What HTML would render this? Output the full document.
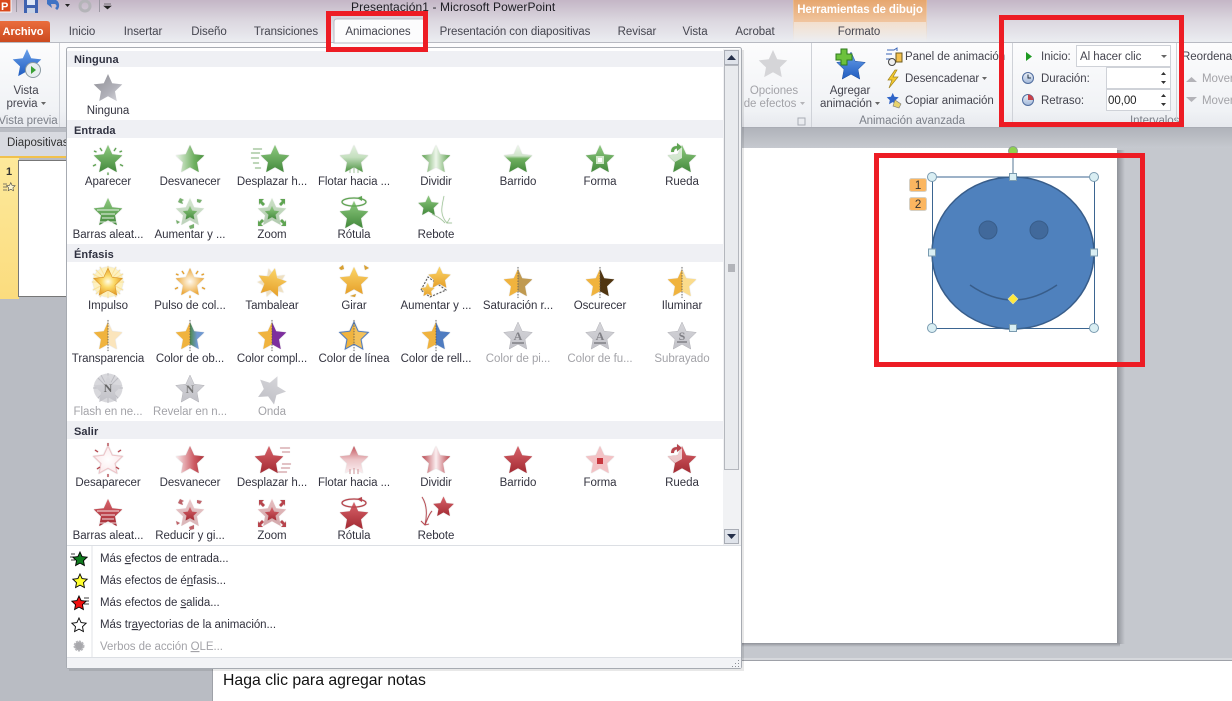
<!DOCTYPE html>
<html lang="es"><head><meta charset="utf-8"><title>Presentación1 - Microsoft PowerPoint</title>
<style>
html,body{margin:0;padding:0;width:1232px;height:701px;overflow:hidden;background:#c5c8ce}
svg{position:absolute;left:0;top:0;display:block}
text{font-family:"Liberation Sans",sans-serif;font-size:11.5px;letter-spacing:-.05px;fill:#33333f}
.c{text-anchor:middle}
.d{fill:#a3a3a8}
.h{font-weight:bold;fill:#2f3140;font-size:11px;letter-spacing:.1px}
.t{fill:#45454f}
.u{text-decoration:underline}
.sh{filter:drop-shadow(.8px .8px .4px rgba(0,0,0,.22))}
</style></head><body>
<svg width="1232" height="701" viewBox="0 0 1232 701" xmlns="http://www.w3.org/2000/svg">
<defs>
<linearGradient id="tb" x1="0" y1="0" x2="0" y2="1"><stop offset="0" stop-color="#c4b6c6"/><stop offset=".5" stop-color="#dcd8e0"/><stop offset="1" stop-color="#eceef2"/></linearGradient>
<linearGradient id="rb" x1="0" y1="0" x2="0" y2="1"><stop offset="0" stop-color="#fcfcfd"/><stop offset=".8" stop-color="#f0f2f5"/><stop offset="1" stop-color="#e6e8ed"/></linearGradient>
<linearGradient id="ctx" x1="0" y1="0" x2="0" y2="1"><stop offset="0" stop-color="#e6a66e"/><stop offset="1" stop-color="#f0c59f"/></linearGradient>
<linearGradient id="ctx2" x1="0" y1="0" x2="0" y2="1"><stop offset="0" stop-color="#f3dfcd"/><stop offset="1" stop-color="#eceef2"/></linearGradient>
<linearGradient id="ctl" x1="0" y1="0" x2="0" y2="1"><stop offset="0" stop-color="#e8b486"/><stop offset="1" stop-color="#eceef2"/></linearGradient>
<linearGradient id="arch" x1="0" y1="0" x2="0" y2="1"><stop offset="0" stop-color="#ea6d3d"/><stop offset="1" stop-color="#cc4a20"/></linearGradient>
<linearGradient id="gb" x1="0" y1="0" x2="0" y2="1"><stop offset="0" stop-color="#b0b3ba"/><stop offset="1" stop-color="#c6c9cf"/></linearGradient>
<linearGradient id="sr" x1="0" y1="0" x2="1" y2="0"><stop offset="0" stop-color="#8f9299"/><stop offset="1" stop-color="#c5c8ce"/></linearGradient>
<linearGradient id="sb" x1="0" y1="0" x2="0" y2="1"><stop offset="0" stop-color="#8f9299"/><stop offset="1" stop-color="#c5c8ce"/></linearGradient>
<linearGradient id="thy" x1="0" y1="0" x2="0" y2="1"><stop offset="0" stop-color="#fde99b"/><stop offset="1" stop-color="#fbdc7e"/></linearGradient>
<linearGradient id="clk" x1="0" y1="0" x2="0" y2="1"><stop offset="0" stop-color="#eef2f8"/><stop offset="1" stop-color="#9fb6d8"/></linearGradient>
<linearGradient id="G" x1="0" y1="0" x2="0" y2="1"><stop offset="0" stop-color="#8fcb80"/><stop offset="1" stop-color="#43893c"/></linearGradient>
<linearGradient id="Gf" x1="0" y1="0" x2="1" y2="0"><stop offset="0" stop-color="#eef6ec"/><stop offset=".65" stop-color="#6fb060"/><stop offset="1" stop-color="#4d9442"/></linearGradient>
<linearGradient id="Gs" x1="0" y1="0" x2="1" y2="0"><stop offset="0" stop-color="#5da04f"/><stop offset=".5" stop-color="#edf6ea"/><stop offset="1" stop-color="#5da04f"/></linearGradient>
<linearGradient id="Gv" x1="0" y1="0" x2="0" y2="1"><stop offset="0" stop-color="#eef6ec"/><stop offset=".4" stop-color="#cfe4ca"/><stop offset=".5" stop-color="#6fb060"/><stop offset="1" stop-color="#44893b"/></linearGradient>
<linearGradient id="Gu" x1="0" y1="0" x2="0" y2="1"><stop offset="0" stop-color="#e4f1e0"/><stop offset=".45" stop-color="#c5dfbf"/><stop offset="1" stop-color="#4d9442"/></linearGradient>
<linearGradient id="R" x1="0" y1="0" x2="0" y2="1"><stop offset="0" stop-color="#d8636a"/><stop offset="1" stop-color="#a32a33"/></linearGradient>
<linearGradient id="Rf" x1="0" y1="0" x2="1" y2="0"><stop offset="0" stop-color="#fbeef0"/><stop offset=".65" stop-color="#cc5a62"/><stop offset="1" stop-color="#ad333b"/></linearGradient>
<linearGradient id="Rs" x1="0" y1="0" x2="1" y2="0"><stop offset="0" stop-color="#b8444c"/><stop offset=".5" stop-color="#fbeef0"/><stop offset="1" stop-color="#b8444c"/></linearGradient>
<linearGradient id="Rv" x1="0" y1="0" x2="0" y2="1"><stop offset="0" stop-color="#c4545c"/><stop offset=".5" stop-color="#ecc5c8"/><stop offset="1" stop-color="#fbeef0"/></linearGradient>
<radialGradient id="Rw"><stop offset="0" stop-color="#fff"/><stop offset="1" stop-color="#fbeaec"/></radialGradient>
<linearGradient id="Y" x1="0" y1="0" x2="0" y2="1"><stop offset="0" stop-color="#fbd568"/><stop offset="1" stop-color="#e6a02a"/></linearGradient>
<radialGradient id="Yg"><stop offset="0" stop-color="#fffde8"/><stop offset=".45" stop-color="#fbd968"/><stop offset="1" stop-color="#e6a02a"/></radialGradient>
<radialGradient id="Yp"><stop offset="0" stop-color="#fffaf0"/><stop offset="1" stop-color="#eca83a"/></radialGradient>
<linearGradient id="Yt" x1="0" y1="0" x2="1" y2="0"><stop offset=".5" stop-color="#f0b33e"/><stop offset=".5" stop-color="#fbe5bc"/></linearGradient>
<linearGradient id="Yo" x1="0" y1="0" x2="1" y2="0"><stop offset=".5" stop-color="#f0b33e"/><stop offset=".5" stop-color="#4d8a4a"/><stop offset=".75" stop-color="#6f98d0"/></linearGradient>
<linearGradient id="Yc" x1="0" y1="0" x2="1" y2="0"><stop offset=".5" stop-color="#f0b33e"/><stop offset=".5" stop-color="#7d2f9e"/></linearGradient>
<linearGradient id="Yl" x1="0" y1="0" x2="1" y2="0"><stop offset=".5" stop-color="#f0b33e"/><stop offset=".5" stop-color="#f3c15b"/></linearGradient>
<linearGradient id="Yr" x1="0" y1="0" x2="1" y2="0"><stop offset=".5" stop-color="#f0b33e"/><stop offset=".5" stop-color="#4f7cc0"/></linearGradient>
<linearGradient id="Ys" x1="0" y1="0" x2="1" y2="0"><stop offset=".5" stop-color="#f0b33e"/><stop offset=".5" stop-color="#c09a50"/></linearGradient>
<linearGradient id="Yd" x1="0" y1="0" x2="1" y2="0"><stop offset=".5" stop-color="#f0b33e"/><stop offset=".5" stop-color="#503510"/></linearGradient>
<linearGradient id="Yi" x1="0" y1="0" x2="1" y2="0"><stop offset=".5" stop-color="#f0b33e"/><stop offset=".5" stop-color="#fbdc8c"/></linearGradient>
<linearGradient id="N" x1="0" y1="0" x2="1" y2="1"><stop offset="0" stop-color="#8e8e94"/><stop offset=".6" stop-color="#b0b0b8"/><stop offset="1" stop-color="#dcdce2"/></linearGradient>
<linearGradient id="D" x1="0" y1="0" x2="0" y2="1"><stop offset="0" stop-color="#d6d6da"/><stop offset="1" stop-color="#c2c2c8"/></linearGradient>
<linearGradient id="B" x1="0" y1="0" x2="0" y2="1"><stop offset="0" stop-color="#6aa0ea"/><stop offset="1" stop-color="#1f5cc0"/></linearGradient>
<path id="s" d="M16 2L20.200 11.200L30.300 12.400L23 19.400L24.800 29.100L16 24.200L7.200 29.100L9 19.400L1.700 12.400L11.800 11.200Z"/>
<g id="rays"><path d="M8 5l2 3M24 5l-2 3M1 23l3-1.500M31 23l-3-1.500M16 32v-2.500M2 8l2.500 1M30 8l-2.500 1" fill="none" stroke="currentColor" stroke-width="1.300"/><use href="#s"/></g>
<g id="spdL"><use href="#s" x="3"/><path d="M-3 6h9M-5 10h9M-5 15h8M-3 20h6M-1 25h6" stroke="currentColor" fill="none" opacity=".7"/></g>
<g id="spdR"><use href="#s" x="-3"/><path d="M24 4h10M26 8h8M26 20h9M25 24h9M22 28h9" stroke="currentColor" fill="none" opacity=".55"/></g>
<g id="fl"><use href="#s"/><path d="M12 25v5M16 24v6M20 25v5" stroke="currentColor" opacity=".5" fill="none"/></g>
<g id="fo"><use href="#s"/><rect x="12" y="13" width="8" height="8" fill="#cfe6c8"/><rect x="14" y="15" width="4" height="4" fill="#fff"/></g>
<g id="ru"><use href="#s"/><path d="M16 2L16 15 9 19 1.700 12.400 11.800 11.200z" fill="#fff" opacity=".7"/><path d="M5 9c0-4 2-6 6-6V0l5 4-5 4V5.500c-2 0-3 1.500-3 3.500z" fill="currentColor"/></g>
<g id="ba"><use href="#s"/><path d="M5 14h22M9 18h14M10 22h12M7 26h18" stroke="#fff" opacity=".85" fill="none" stroke-width="1.100"/></g>
<g id="au"><use href="#s" opacity=".3"/><use href="#s" transform="translate(8 9) scale(.5)"/><path d="M4 6l2-4 4 2-2 1 1 3-3-1zM28 4l-5-1 0 3 3 1zM20 28l-5 2 1 3 4-1zM6 26l-4-2 1 4z" fill="currentColor" opacity=".8"/></g>
<g id="zo"><use href="#s" opacity=".35"/><use href="#s" transform="translate(8 9) scale(.5)"/><path d="M3 3h5l-2 2 3 3-2 2-3-3-1 2zM29 3h-5l2 2-3 3 2 2 3-3 1 2zM2 30h5l-2-2 3-3-2-2-3 3-1-2zM30 30h-5l2-2-3-3 2-2 3 3 1-2z" fill="currentColor"/></g>
<g id="ro"><use href="#s" y="3"/><ellipse cx="16" cy="6" rx="12" ry="4" fill="none" stroke="currentColor" stroke-width="1.300"/><path d="M19 2l5-2v5z" fill="currentColor"/></g>
<g id="reI"><use href="#s" transform="translate(-3 -2) scale(.72)"/><path d="M24 0C22 10 19 18 27 27M12 18c3 2 8 3 13 9M30 22l-3 5h5" fill="none" stroke="currentColor" stroke-width=".7" opacity=".6"/></g>
<g id="reO"><use href="#s" transform="translate(12 -2) scale(.72)"/><path d="M2 0c4 6 6 14 3 28M12 14c-3 3-5 9-7 14M1 24l4 4 4-1" fill="none" stroke="currentColor" stroke-width=".9"/></g>
<g id="des"><use href="#s" fill="url(#Rw)" stroke="#eec4c8"/><path d="M16 -1v3M3 6l3 2M29 6l-3 2M16 33v-3M5 25l3-2M27 25l-3-2" stroke="currentColor" fill="none" stroke-width="1.300"/></g>
<g id="impulso"><circle cx="16" cy="16" r="15" fill="#fdf1c0"/><path d="M16 0v32M0 16h32M4 4l24 24M28 4L4 28M8 1l16 30M24 1L8 31M1 8l30 16M31 8L1 24" stroke="#fbe29a" fill="none"/><use href="#s" fill="url(#Yg)" stroke="#d8962a" stroke-width=".6"/></g>
<g id="halfline"><path d="M16 0v31" stroke="#555" stroke-width=".8" stroke-dasharray="1.500 1.200" fill="none"/></g>
<g id="arc"><use href="#s"/><path d="M1 3l4-3 1 4-3 1zM26 0l5 3-4 2zM12 31l6-2-1 3z" fill="#d9a030"/></g>
</defs>

<!-- window chrome -->
<rect width="1232" height="43" fill="url(#tb)"/>
<rect y="42" width="1232" height="1" fill="#b8bac2"/>
<rect y="43" width="1232" height="85" fill="url(#rb)"/>
<rect y="127" width="1232" height="1" fill="#a9acb4"/>
<rect y="128" width="1232" height="20" fill="url(#gb)"/>
<rect y="148" width="1232" height="553" fill="#c5c8ce"/>

<!-- quick access -->
<rect x="-1" y="-1" width="12" height="13" fill="#d9481c" stroke="#fff"/>
<text x="1" y="10" style="font-weight:bold;font-size:11px;fill:#fff">P</text>
<rect x="16" y="0" width="1" height="12" fill="#9b97a2"/>
<rect x="24" y="-1" width="14" height="14" fill="#3e62b0"/><rect x="27" y="0" width="8" height="5" fill="#dfe8f6"/><rect x="27" y="8" width="8" height="5" fill="#c8d2e4"/>
<path d="M47 4l0-4h9c4 2 4 8 1 10l-2-2c2-1 2-3 0-4h-4l1 4z" fill="#3e72c4"/>
<path d="M65 4h5l-2.500 3z" fill="#222"/>
<circle cx="85" cy="6" r="5" fill="none" stroke="#b4b4b8" stroke-width="3"/>
<rect x="99" y="0" width="1" height="12" fill="#9b97a2"/>
<path d="M104 4h7M104 6h7l-3.500 3z" fill="#222" stroke="#222" stroke-width=".6"/>
<text x="351" y="11" style="font-size:12px;fill:#1c1c22;letter-spacing:.1px">Presentación1  -  Microsoft PowerPoint</text>

<!-- contextual tab -->
<rect x="793" y="0" width="134" height="22" fill="url(#ctx)"/>
<rect x="793" y="22" width="134" height="20" fill="url(#ctx2)"/>
<rect x="793" y="0" width="1" height="42" fill="url(#ctl)"/>
<rect x="926" y="0" width="1" height="42" fill="url(#ctl)"/>
<text x="860" y="13" class="c" style="font-weight:bold;fill:#fff;font-size:11.500px;letter-spacing:-.1px">Herramientas de dibujo</text>

<!-- tabs -->
<path d="M0 42V21h47q3 0 3 3v18z" fill="url(#arch)"/>
<text x="23" y="35" class="c" style="fill:#fff;font-weight:bold;font-size:11px;letter-spacing:0">Archivo</text>
<path d="M334 43V22q0-3 3-3h85q3 0 3 3v21z" fill="#fcfcfd" stroke="#b8bac2"/>
<g class="tabs">
<text x="82" y="35" class="c t">Inicio</text>
<text x="143" y="35" class="c t">Insertar</text>
<text x="209" y="35" class="c t">Diseño</text>
<text x="286" y="35" class="c t">Transiciones</text>
<text x="378" y="35" class="c t">Animaciones</text>
<text x="515" y="35" class="c t">Presentación con diapositivas</text>
<text x="637" y="35" class="c t">Revisar</text>
<text x="695" y="35" class="c t">Vista</text>
<text x="755" y="35" class="c t">Acrobat</text>
<text x="859" y="35" class="c t">Formato</text>
</g>

<!-- ribbon left -->
<use href="#s" x="11" y="47" fill="url(#B)"/>
<circle cx="33" cy="70" r="7.500" fill="#e8eef0" stroke="#8b9aa2"/><path d="M31 66l5 4-5 4z" fill="#3aa035"/>
<text x="26" y="94" class="c t">Vista</text>
<text x="22" y="107" class="c t">previa</text><path d="M41 102h5l-2.500 3z" fill="#666"/>
<text x="28" y="124" class="c d" style="fill:#7c8089">Vista previa</text>
<rect x="59" y="43" width="1" height="84" fill="#cfd2d8"/>

<!-- ribbon right -->
<use href="#s" x="757" y="48" fill="#d5d5d8"/>
<text x="774" y="94" class="c d">Opciones</text>
<text x="770" y="107" class="c d">de efectos</text><path d="M800 102h5l-2.500 3z" fill="#b5b5b9"/>
<path d="M798 118h7v7h-7z" fill="none" stroke="#a8acb4"/>
<rect x="811" y="43" width="1" height="84" fill="#cfd2d8"/>
<use href="#s" x="835" y="50" fill="url(#B)" stroke="#1c4e9e" stroke-width=".5"/>
<path d="M841 49h6v5h5v6h-5v5h-6v-5h-5v-6h5z" fill="#6cc13c" stroke="#2e7a1e"/>
<text x="850" y="94" class="c t">Agregar</text>
<text x="846" y="107" class="c t">animación</text><path d="M875 102h5l-2.500 3z" fill="#666"/>
<text x="912" y="124" class="c" style="fill:#7c8089">Animación avanzada</text>

<path d="M887 50h7l3-2v3M886 54h6M886 59h4" stroke="#3b66b8" fill="none"/><circle cx="892" cy="62" r="3.500" fill="#eee" stroke="#444"/><rect x="896" y="53" width="6" height="9" fill="#f4c14e" stroke="#6d5a1e"/>
<text x="905" y="60" class="t">Panel de animación</text>
<path d="M895 70l-7 10h4l-3 8 9-11h-5l4-7z" fill="#f4c92e" stroke="#a08420" stroke-width=".7"/>
<text x="905" y="82" class="t">Desencadenar</text><path d="M982 77h5l-2.500 3z" fill="#666"/>
<use href="#s" transform="translate(886 92) scale(.42)" fill="#2f64c8"/>
<path d="M895 100l6 4-2 4-6-2z" fill="#e8d36c" stroke="#777" stroke-width=".6"/>
<text x="905" y="104" class="t">Copiar animación</text>

<rect x="1012" y="43" width="1" height="84" fill="#cfd2d8"/>
<path d="M1026 52l6 4.500-6 4.500z" fill="#1e9a22"/>
<text x="1041" y="60" class="t">Inicio:</text>
<rect x="1076.500" y="45.500" width="94" height="21" fill="#fff" stroke="#cfd2d8"/>
<text x="1080" y="60" class="t">Al hacer clic</text><path d="M1161 55h6l-3 3z" fill="#666"/>
<circle cx="1028" cy="78" r="5.500" fill="url(#clk)" stroke="#4f6c9e"/><path d="M1028 74.500v3.500h3" stroke="#234" fill="none"/>
<text x="1041" y="82" class="t">Duración:</text>
<rect x="1106.500" y="67.500" width="64" height="21" fill="#fff" stroke="#cfd2d8"/>
<path d="M1161 75l2.500-3 2.500 3zM1161 81l2.500 3 2.500-3z" fill="#333"/>
<circle cx="1028" cy="100" r="5.500" fill="url(#clk)" stroke="#4f6c9e"/><path d="M1028 100V94.500a5.500 5.500 0 0 1 5.500 5.500z" fill="#c8424a"/>
<text x="1041" y="104" class="t">Retraso:</text>
<rect x="1106.500" y="89.500" width="64" height="21" fill="#fff" stroke="#cfd2d8"/>
<text x="1108" y="104" style="fill:#222">00,00</text>
<path d="M1161 97l2.500-3 2.500 3zM1161 103l2.500 3 2.500-3z" fill="#333"/>
<text x="1130" y="124" style="fill:#7c8089">Intervalos</text>
<rect x="1176" y="43" width="1" height="84" fill="#cfd2d8"/>
<text x="1182" y="60" class="t">Reordenar</text>
<path d="M1186 82l5.500-5 5.500 5z" fill="#b3b3b8"/><text x="1202" y="82" class="d">Mover</text>
<path d="M1186 97l5.500 5 5.500-5z" fill="#b3b3b8"/><text x="1202" y="104" class="d">Mover</text>

<!-- left pane -->
<rect x="0" y="128" width="66" height="533" fill="#b9bcc3"/>
<rect x="0" y="132" width="66" height="24" fill="#d8dae0"/>
<text x="7" y="146" style="fill:#333">Diapositivas</text>
<rect x="0" y="156" width="66" height="2" fill="#f1c14c"/>
<rect x="0" y="158" width="19" height="141" fill="url(#thy)"/>
<text x="6" y="175" style="font-weight:bold;fill:#333;font-size:11px">1</text>
<path d="M3 184h4M3 187h4M3 190h4" stroke="#555" fill="none" stroke-width=".8"/><use href="#s" transform="translate(6 182) scale(.3)" fill="#fdf6d0" stroke="#444" stroke-width="2"/>
<rect x="18.500" y="160.500" width="50" height="136" fill="#fff" stroke="#777"/>
<rect x="0" y="299" width="66" height="362" fill="#b9bcc3"/>

<!-- slide -->
<rect x="1117" y="150" width="8" height="494" fill="url(#sr)"/>
<rect x="742" y="643" width="378" height="4" fill="url(#sb)"/>
<rect x="700" y="148" width="417" height="495" fill="#fff"/>

<!-- notes -->
<rect x="205" y="658" width="1027" height="43" fill="#d6d8dc"/>
<rect x="212.500" y="660.500" width="1020" height="41" fill="#fff" stroke="#9ea1a8"/>
<text x="223" y="685" style="font-size:15.800px;fill:#111;letter-spacing:0">Haga clic para agregar notas</text>
<rect x="66" y="660" width="146" height="41" fill="#b9bcc3"/>
<rect x="0" y="660" width="66" height="41" fill="#b9bcc3"/>

<!-- shape -->
<line x1="1013" y1="155" x2="1013" y2="177" stroke="#8ea4b8" stroke-width="1.500"/>
<circle cx="1013" cy="151" r="4.500" fill="#8fd14f" stroke="#8a9a90"/>
<ellipse cx="1013" cy="253" rx="81" ry="76" fill="#4f81bd" stroke="#385d8a" stroke-width="1.500"/>
<circle cx="988" cy="230" r="9" fill="#41699b" stroke="#385d8a"/>
<circle cx="1039" cy="230" r="9" fill="#41699b" stroke="#385d8a"/>
<path d="M970 285q43 30 87 0" fill="none" stroke="#385d8a" stroke-width="1.500"/>
<rect x="932.500" y="177" width="162" height="151.500" fill="none" stroke="#3b6591"/>
<g fill="#d9eef3" stroke="#7a9bb0">
<circle cx="932" cy="177" r="4.500"/><circle cx="1094" cy="177" r="4.500"/><circle cx="932" cy="328" r="4.500"/><circle cx="1094" cy="328" r="4.500"/>
<rect x="1009.500" y="173.500" width="7" height="7"/><rect x="1009.500" y="324.500" width="7" height="7"/><rect x="928.500" y="249" width="7" height="7"/><rect x="1090.500" y="249" width="7" height="7"/>
</g>
<path d="M1013 294l5 5-5 5-5-5z" fill="#ffe93b" stroke="#e8e4b0" stroke-width=".6"/>
<g stroke="#d6d0c4" fill="#fbb660">
<rect x="909.500" y="178.500" width="17" height="13" rx="2"/>
<rect x="909.500" y="197.500" width="17" height="13" rx="2"/>
</g>
<text x="918" y="189" class="c" style="fill:#333">1</text>
<text x="918" y="208" class="c" style="fill:#333">2</text>

<!-- gallery panel -->
<rect x="69" y="50" width="675" height="621" fill="#000" opacity=".09"/>
<rect x="66.500" y="47.500" width="675" height="621" rx="2" fill="#fff" stroke="#a7abb2"/>
<g fill="#eff0f4">
<rect x="67" y="51" width="656" height="16"/>
<rect x="67" y="120" width="656" height="18"/>
<rect x="67" y="244" width="656" height="18"/>
<rect x="67" y="421" width="656" height="18"/>
</g>
<text x="74" y="63" class="h">Ninguna</text>
<text x="74" y="134" class="h">Entrada</text>
<text x="74" y="258" class="h">Énfasis</text>
<text x="74" y="435" class="h">Salir</text>

<!-- scrollbar -->
<rect x="723" y="49" width="18" height="496" fill="#f1f2f4"/>
<rect x="724.500" y="50.500" width="14" height="14" fill="#dfe3ea" stroke="#a9adb5"/>
<path d="M727 60l4.500-5 4.500 5z" fill="#25304a"/>
<rect x="724.500" y="65.500" width="14" height="404" fill="#e9ebee" stroke="#b4b7bd"/>
<path d="M728 265h7M728 267h7M728 269h7M728 271h7" stroke="#7a7d84" fill="none"/>
<rect x="724.500" y="529.500" width="14" height="14" fill="#dfe3ea" stroke="#a9adb5"/>
<path d="M727 534l4.500 5 4.500-5z" fill="#25304a"/>

<!-- Ninguna -->
<use href="#s" x="92" y="72" fill="url(#N)"/>
<text x="108" y="114" class="c">Ninguna</text>

<!-- Entrada row 1 -->
<g fill="url(#G)" color="#5fa552" class="sh">
<use href="#rays" x="92" y="143"/>
<use href="#s" x="174" y="143" fill="url(#Gf)"/>
<use href="#spdL" x="256" y="143"/>
<use href="#fl" x="338" y="143" fill="url(#Gu)"/>
<use href="#s" x="420" y="143" fill="url(#Gs)"/>
<use href="#s" x="502" y="143" fill="url(#Gv)"/>
<use href="#fo" x="584" y="143"/>
<use href="#ru" x="666" y="143"/>
<use href="#ba" x="92" y="196"/>
<use href="#au" x="174" y="196"/>
<use href="#zo" x="256" y="196"/>
<use href="#ro" x="338" y="196"/>
<use href="#reI" x="420" y="196"/>
</g>
<text x="108" y="185" class="c">Aparecer</text>
<text x="190" y="185" class="c">Desvanecer</text>
<text x="272" y="185" class="c">Desplazar h...</text>
<text x="354" y="185" class="c">Flotar hacia ...</text>
<text x="436" y="185" class="c">Dividir</text>
<text x="518" y="185" class="c">Barrido</text>
<text x="600" y="185" class="c">Forma</text>
<text x="682" y="185" class="c">Rueda</text>
<text x="108" y="238" class="c">Barras aleat...</text>
<text x="190" y="238" class="c">Aumentar y ...</text>
<text x="272" y="238" class="c">Zoom</text>
<text x="354" y="238" class="c">Rótula</text>
<text x="436" y="238" class="c">Rebote</text>

<!-- Énfasis -->
<g class="sh">
<use href="#impulso" x="92" y="266"/>
<use href="#rays" x="174" y="266" fill="url(#Yp)" color="#e6a02a"/>
<use href="#s" x="256" y="266" fill="#f6e2b8" opacity=".7" transform="rotate(-14 272 282)"/>
<use href="#s" x="256" y="266" fill="url(#Y)" transform="rotate(12 272 282)"/>
<use href="#arc" x="338" y="265" fill="url(#Y)"/>
<path d="M421 290l7-13 18 13-16 7z" fill="none" stroke="#555" stroke-dasharray="2 1.500"/>
<use href="#s" transform="translate(427 265) scale(.78)" fill="url(#Y)"/>
<use href="#s" transform="translate(420 282) scale(.48)" fill="url(#Y)"/>
<use href="#s" x="502" y="267" fill="url(#Ys)"/><use href="#halfline" x="502" y="267"/>
<use href="#s" x="584" y="267" fill="url(#Yd)"/><use href="#halfline" x="584" y="267"/>
<use href="#s" x="666" y="267" fill="url(#Yi)"/><use href="#halfline" x="666" y="267"/>
<use href="#s" x="92" y="320" fill="url(#Yt)"/><use href="#halfline" x="92" y="320"/>
<use href="#s" x="174" y="320" fill="url(#Yo)"/><use href="#halfline" x="174" y="320"/>
<use href="#s" x="256" y="320" fill="url(#Yc)"/><use href="#halfline" x="256" y="320"/>
<use href="#s" x="338" y="320" fill="url(#Yl)" stroke="#4f7cc0"/><use href="#halfline" x="338" y="320"/>
<use href="#s" x="420" y="320" fill="url(#Yr)"/><use href="#halfline" x="420" y="320"/>
</g>
<g fill="url(#D)">
<use href="#s" x="502" y="320" stroke="#b0b0b6" stroke-width=".5"/>
<use href="#s" x="584" y="320" stroke="#b0b0b6" stroke-width=".5"/>
<use href="#s" x="666" y="320" stroke="#b0b0b6" stroke-width=".5"/>
<use href="#s" x="174" y="373" stroke="#b0b0b6" stroke-width=".5"/>
<circle cx="108" cy="388" r="14.500" fill="#d8d8dc"/>
<path d="M108 373v30M93 388h30M98 378l20 20M118 378l-20 20M101 375l14 26M115 375l-14 26" stroke="#bcbcc2" fill="none"/>
<use href="#s" x="92" y="373"/>
<use href="#s" transform="rotate(25 272 388)" x="256" y="373"/>
</g>
<text x="518" y="340" style="font-family:'Liberation Serif',serif;font-size:12px;font-weight:bold;fill:#808086;letter-spacing:0" class="c">A</text>
<text x="600" y="340" style="font-family:'Liberation Serif',serif;font-size:12px;font-weight:bold;fill:#808086;letter-spacing:0" class="c">A</text>
<text x="682" y="340" style="font-family:'Liberation Serif',serif;font-size:12px;font-weight:bold;fill:#808086;letter-spacing:0" class="c">S</text>
<text x="108" y="392" style="font-family:'Liberation Serif',serif;font-size:12px;font-weight:bold;fill:#666;letter-spacing:0" class="c">N</text>
<text x="190" y="393" style="font-family:'Liberation Serif',serif;font-size:12px;font-weight:bold;fill:#777;letter-spacing:0" class="c">N</text>
<path d="M512 343h12M594 343h12M677 342h10" stroke="#808086" stroke-width="1.500" fill="none"/>
<text x="108" y="309" class="c">Impulso</text>
<text x="190" y="309" class="c">Pulso de col...</text>
<text x="272" y="309" class="c">Tambalear</text>
<text x="354" y="309" class="c">Girar</text>
<text x="436" y="309" class="c">Aumentar y ...</text>
<text x="518" y="309" class="c">Saturación r...</text>
<text x="600" y="309" class="c">Oscurecer</text>
<text x="682" y="309" class="c">Iluminar</text>
<text x="108" y="362" class="c">Transparencia</text>
<text x="190" y="362" class="c">Color de ob...</text>
<text x="272" y="362" class="c">Color compl...</text>
<text x="354" y="362" class="c">Color de línea</text>
<text x="436" y="362" class="c">Color de rell...</text>
<text x="518" y="362" class="c d">Color de pi...</text>
<text x="600" y="362" class="c d">Color de fu...</text>
<text x="682" y="362" class="c d">Subrayado</text>
<text x="108" y="415" class="c d">Flash en ne...</text>
<text x="190" y="415" class="c d">Revelar en n...</text>
<text x="272" y="415" class="c d">Onda</text>

<!-- Salir -->
<g fill="url(#R)" color="#b8444c" class="sh">
<use href="#des" x="92" y="444"/>
<use href="#s" x="174" y="444" fill="url(#Rf)"/>
<use href="#spdR" x="256" y="444"/>
<use href="#fl" x="338" y="444" fill="url(#Rv)"/>
<use href="#s" x="420" y="444" fill="url(#Rs)"/>
<use href="#s" x="502" y="444"/>
<use href="#s" x="584" y="444" fill="#f3c2c5"/><rect x="597" y="458" width="6" height="6" fill="#c8383f"/>
<use href="#ru" x="666" y="444"/>
<use href="#ba" x="92" y="497"/>
<use href="#au" x="174" y="497"/>
<use href="#zo" x="256" y="497"/>
<use href="#ro" x="338" y="497"/>
<use href="#reO" x="420" y="497"/>
</g>
<text x="108" y="486" class="c">Desaparecer</text>
<text x="190" y="486" class="c">Desvanecer</text>
<text x="272" y="486" class="c">Desplazar h...</text>
<text x="354" y="486" class="c">Flotar hacia ...</text>
<text x="436" y="486" class="c">Dividir</text>
<text x="518" y="486" class="c">Barrido</text>
<text x="600" y="486" class="c">Forma</text>
<text x="682" y="486" class="c">Rueda</text>
<text x="108" y="539" class="c">Barras aleat...</text>
<text x="190" y="539" class="c">Reducir y gi...</text>
<text x="272" y="539" class="c">Zoom</text>
<text x="354" y="539" class="c">Rótula</text>
<text x="436" y="539" class="c">Rebote</text>

<!-- menu -->
<rect x="67" y="545" width="674" height="1" fill="#dcdfe4"/>
<rect x="91.500" y="546" width="1" height="111" fill="#e2e3e7"/>
<g stroke="#000" stroke-width="1.800">
<use href="#s" transform="translate(72 551) scale(.5)" fill="#0f7a1e"/>
<use href="#s" transform="translate(72 573) scale(.5)" fill="#ffff2e"/>
<use href="#s" transform="translate(71 595) scale(.5)" fill="#f01010"/>
<use href="#s" transform="translate(71 617) scale(.5)" fill="#fff"/>
</g>
<path d="M71 554h4M70 557h4M71 560h4M84 598h5M85 601h4M84 604h5" stroke="#000" fill="none" stroke-width=".8"/>
<circle cx="79" cy="646" r="4.500" fill="#a8a8ac" stroke="#b8b8bc" stroke-width="2" stroke-dasharray="2 1"/>
<text x="100" y="562">Más <tspan class="u">e</tspan>fectos de entrada...</text>
<text x="100" y="584">Más efectos de é<tspan class="u">n</tspan>fasis...</text>
<text x="100" y="606">Más efectos de <tspan class="u">s</tspan>alida...</text>
<text x="100" y="628">Más tr<tspan class="u">a</tspan>yectorias de la animación...</text>
<text x="100" y="650" class="d">Verbos de acción <tspan class="u">O</tspan>LE...</text>
<rect x="67" y="657" width="674" height="11" fill="#f2f3f6"/>
<rect x="67" y="657" width="674" height="1" fill="#dcdfe4"/>
<path d="M738 660h1v1h-1zM735 663h1v1h-1zM738 663h1v1h-1zM732 666h1v1h-1zM735 666h1v1h-1zM738 666h1v1h-1z" fill="#8a8d94"/>

<!-- red annotation boxes -->
<g fill="none" stroke="#ed1c24" stroke-width="5">
<rect x="328.500" y="13.500" width="97" height="36"/>
<rect x="1001.500" y="17.500" width="180" height="107"/>
<rect x="876.500" y="155.500" width="266" height="209"/>
</g>
</svg>
</body></html>
